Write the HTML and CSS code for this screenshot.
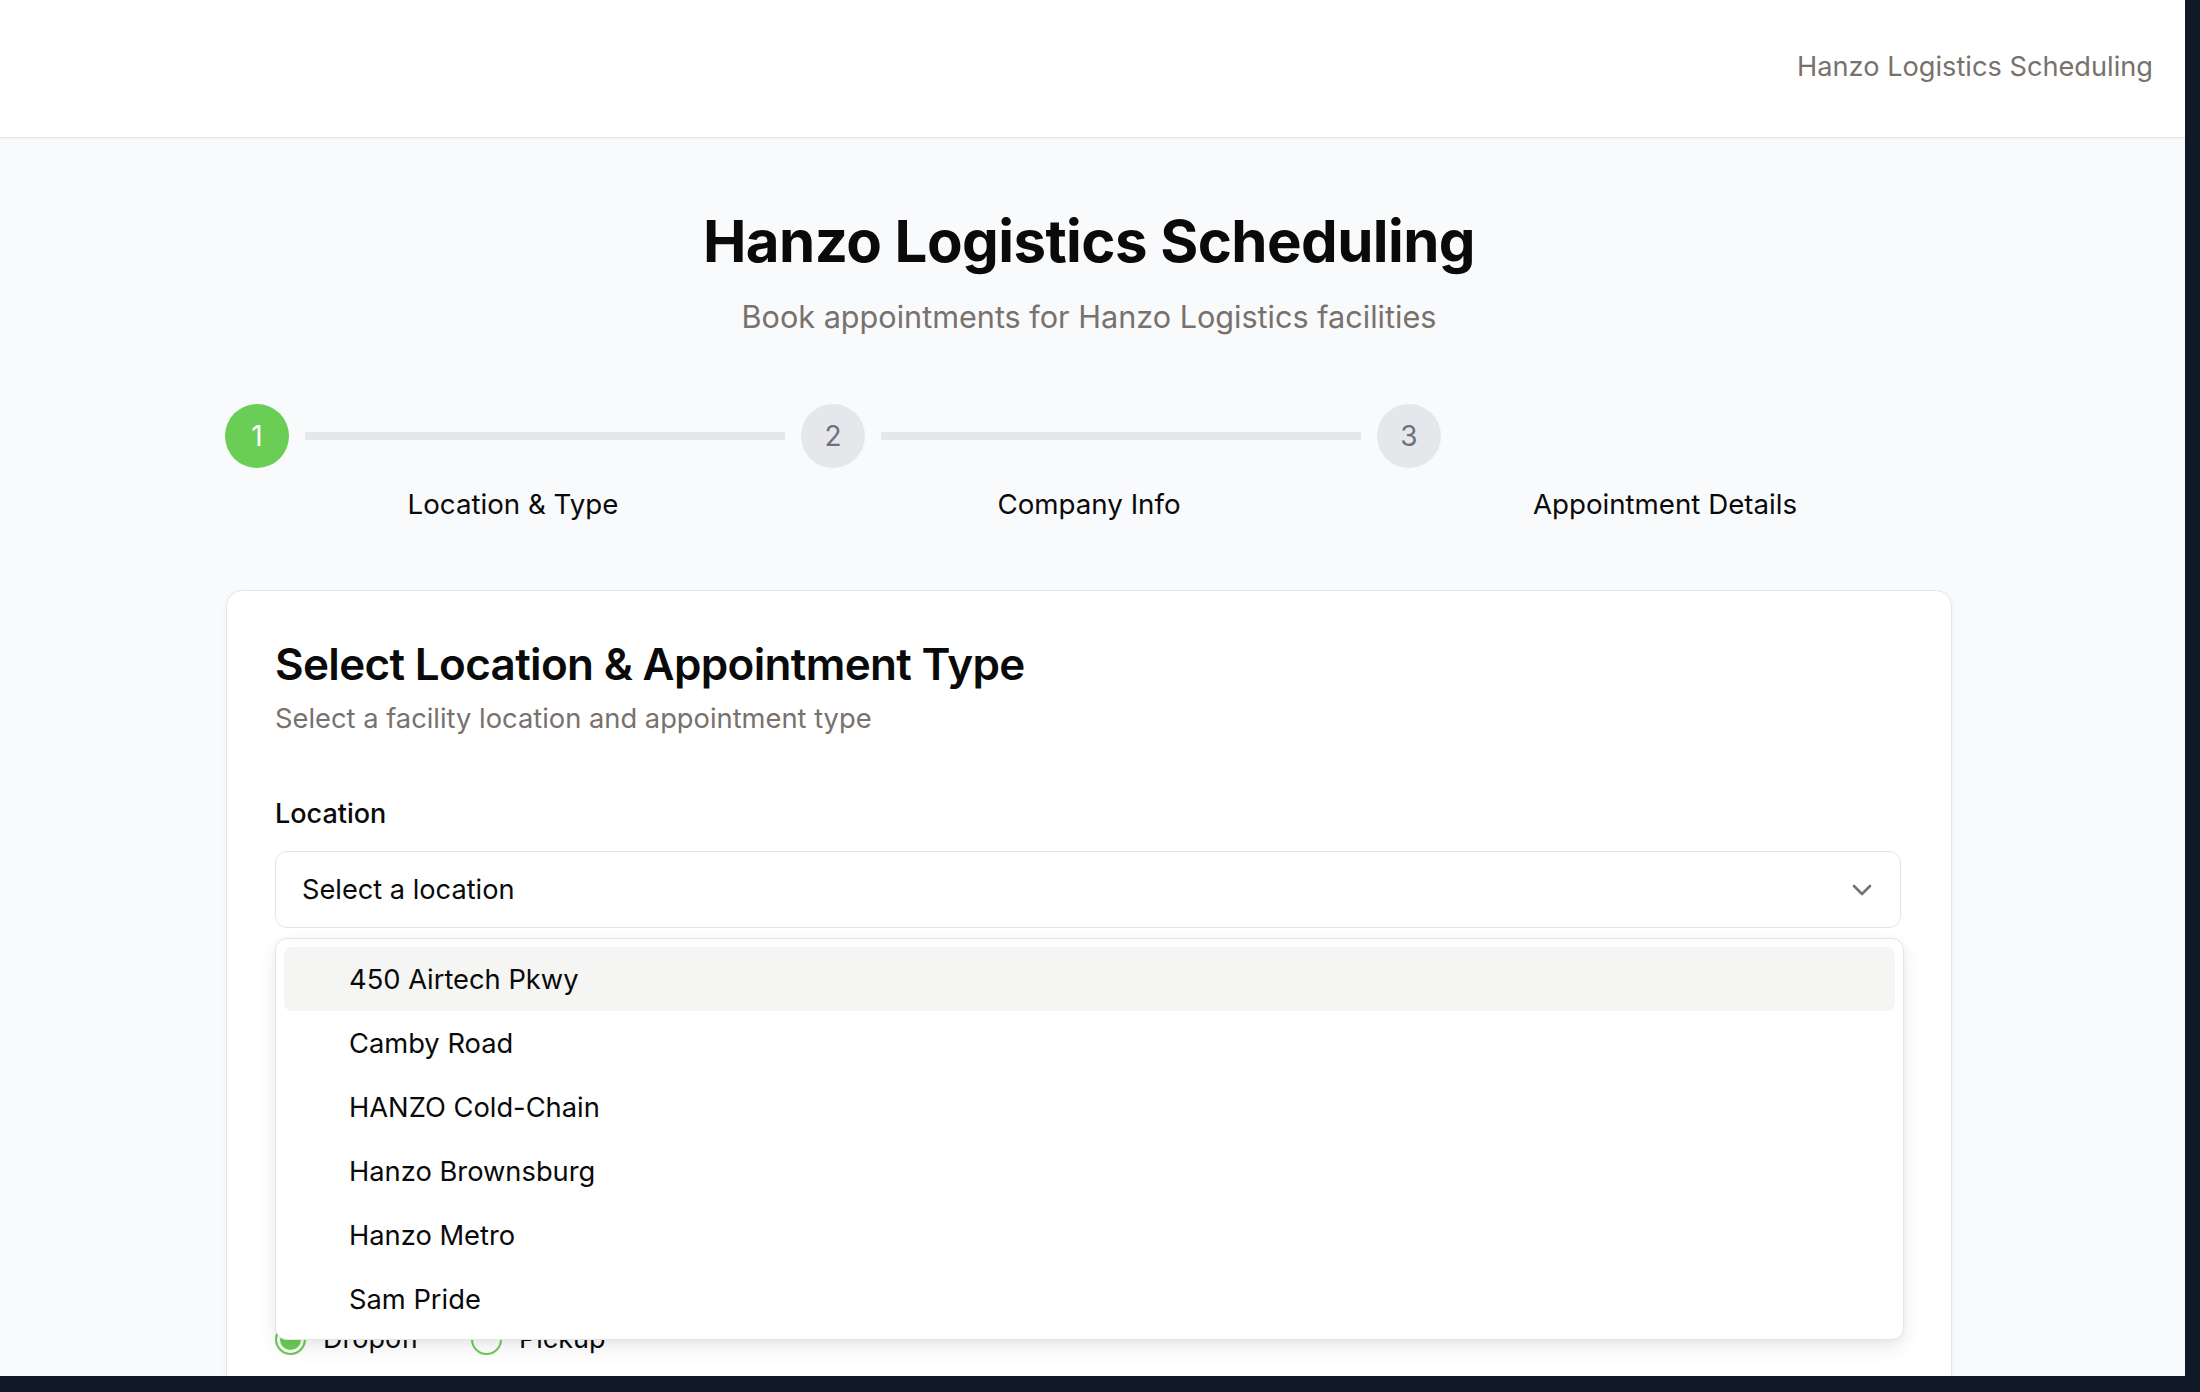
FILE: index.html
```html
<!DOCTYPE html>
<html lang="en">
<head>
<meta charset="utf-8">
<title>Hanzo Logistics Scheduling</title>
<link rel="stylesheet" href="styles.css">
</head>
<body>
<div class="app">
  <header class="topbar">
    <span class="brand">Hanzo Logistics Scheduling</span>
  </header>
  <main class="main">
    <div class="container">
      <h1 class="page-title">Hanzo Logistics Scheduling</h1>
      <p class="page-subtitle">Book appointments for Hanzo Logistics facilities</p>

      <ol class="steps">
        <li class="step">
          <div class="step-track">
            <span class="step-dot active">1</span>
            <span class="step-line"></span>
          </div>
          <span class="step-label">Location &amp; Type</span>
        </li>
        <li class="step">
          <div class="step-track">
            <span class="step-dot">2</span>
            <span class="step-line"></span>
          </div>
          <span class="step-label">Company Info</span>
        </li>
        <li class="step">
          <div class="step-track">
            <span class="step-dot">3</span>
          </div>
          <span class="step-label">Appointment Details</span>
        </li>
      </ol>

      <section class="card">
        <h2 class="card-title">Select Location &amp; Appointment Type</h2>
        <p class="card-desc">Select a facility location and appointment type</p>

        <div class="field field-location">
          <label class="field-label">Location</label>
          <div class="select-trigger">
            <span class="select-value">Select a location</span>
            <svg class="chevron" width="20" height="12" viewBox="0 0 20 12" fill="none">
              <path d="M2 2l8 8 8-8" stroke="#737373" stroke-width="2.6" stroke-linecap="round" stroke-linejoin="round"/>
            </svg>
          </div>
          <ul class="select-menu">
            <li class="menu-item highlighted">450 Airtech Pkwy</li>
            <li class="menu-item">Camby Road</li>
            <li class="menu-item">HANZO Cold-Chain</li>
            <li class="menu-item">Hanzo Brownsburg</li>
            <li class="menu-item">Hanzo Metro</li>
            <li class="menu-item">Sam Pride</li>
          </ul>
        </div>

        <div class="field field-type">
          <label class="field-label">Appointment Type</label>
          <div class="radio-group">
            <label class="radio"><span class="radio-dot checked"></span><span>Dropoff</span></label>
            <label class="radio"><span class="radio-dot"></span><span>Pickup</span></label>
          </div>
        </div>
      </section>
    </div>
  </main>
</div>
</body>
</html>
```

FILE: styles.css
```css
* { box-sizing: border-box; }
html, body { margin: 0; padding: 0; }
body {
  background: #111827;
  font-family: Inter, "Noto Sans", "Liberation Sans", sans-serif;
  color: #0a0a0a;
}
.app {
  width: 2185px;
  height: 1376px;
  overflow: hidden;
  background: #f9fafb;
}
.topbar {
  height: 138px;
  background: #ffffff;
  border-bottom: 1px solid #e5e7eb;
  box-shadow: 0 1px 3px rgba(0,0,0,0.04);
  display: flex;
  align-items: center;
  justify-content: flex-end;
  padding: 0 32px 4px 0;
}
.brand {
  font-size: 27.2px;
  color: #78716c;
  line-height: 40px;
}
.main {
  padding: 68px 7px 0 0;
}
.container {
  width: 1728px;
  margin: 0 auto;
}
.page-title {
  margin: 0;
  text-align: center;
  font-size: 58.2px;
  line-height: 71px;
  font-weight: 700;
  letter-spacing: -0.01em;
  color: #0a0a0a;
}
.page-subtitle {
  margin: 20px 0 0;
  text-align: center;
  font-size: 30.6px;
  line-height: 40px;
  color: #78716c;
}
.steps {
  list-style: none;
  margin: 67px 0 0;
  padding: 0;
  display: grid;
  grid-template-columns: repeat(3, 1fr);
}
.step {
  display: flex;
  flex-direction: column;
}
.step-track {
  display: flex;
  align-items: center;
  height: 64px;
}
.step-dot {
  width: 64px;
  height: 64px;
  flex: none;
  border-radius: 50%;
  background: #e5e7eb;
  color: #6b7280;
  display: flex;
  align-items: center;
  justify-content: center;
  font-size: 28px;
}
.step-dot.active {
  background: #6acd55;
  color: #ffffff;
}
.step-line {
  flex: 1;
  height: 8px;
  background: #e5e7eb;
  margin: 0 16px;
}
.step-label {
  margin-top: 16px;
  text-align: center;
  font-size: 27.7px;
  line-height: 40px;
  color: #0a0a0a;
}
.card {
  margin: 66px 0 0 1px;
  width: 1726px;
  background: #ffffff;
  border: 1px solid #e5e5e5;
  border-radius: 16px;
  box-shadow: 0 2px 6px rgba(0,0,0,0.05);
  padding: 47px 48px 80px;
}
.card-title {
  margin: 0;
  font-size: 44px;
  line-height: 52px;
  font-weight: 600;
  letter-spacing: -0.015em;
}
.card-desc {
  margin: 10px 0 0;
  font-size: 27.3px;
  line-height: 38px;
  color: #78716c;
}
.field-location {
  position: relative;
  margin-top: 57px;
}
.field-label {
  display: block;
  font-size: 27px;
  line-height: 38px;
  font-weight: 500;
  color: #0a0a0a;
}
.select-trigger {
  margin-top: 18px;
  width: 1626px;
  height: 77px;
  border: 1.5px solid #e5e5e5;
  border-radius: 12px;
  display: flex;
  align-items: center;
  justify-content: space-between;
  padding: 0 28px 0 26px;
  background: #ffffff;
}
.select-value {
  font-size: 27.2px;
  color: #0a0a0a;
}
.select-menu {
  position: absolute;
  left: 0;
  top: calc(100% + 10px);
  width: 1629px;
  margin: 0;
  padding: 8px;
  list-style: none;
  background: #ffffff;
  border: 1.5px solid #e5e5e5;
  border-radius: 12px;
  box-shadow: 0 8px 20px rgba(0,0,0,0.08), 0 2px 6px rgba(0,0,0,0.04);
  z-index: 5;
}
.menu-item {
  height: 64px;
  display: flex;
  align-items: center;
  padding-left: 65px;
  border-radius: 8px;
  font-size: 27.3px;
  color: #0a0a0a;
}
.menu-item.highlighted {
  background: #f5f5f4;
}
.field-type {
  margin-top: 337px;
}
.radio-group {
  margin-top: 16px;
  display: flex;
  gap: 51px;
  align-items: center;
}
.radio {
  display: flex;
  align-items: center;
  gap: 17px;
  font-size: 27px;
  line-height: 40px;
}
.radio-dot {
  width: 31px;
  height: 31px;
  border-radius: 50%;
  border: 2px solid #6acd55;
  background: #ffffff;
}
.radio-dot.checked {
  background: #6acd55;
  box-shadow: inset 0 0 0 3px #ffffff;
}
```
